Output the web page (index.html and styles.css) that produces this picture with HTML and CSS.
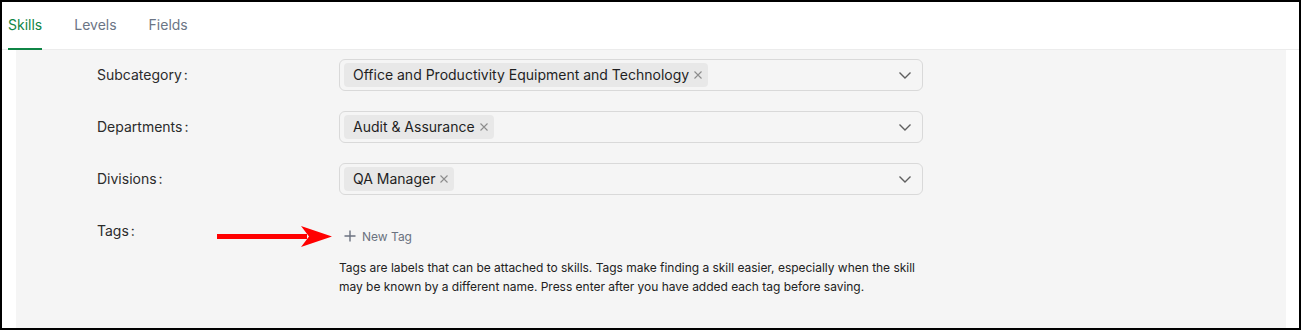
FILE: index.html
```html
<!DOCTYPE html>
<html lang="en">
<head>
<meta charset="utf-8">
<title>Skills</title>
<link rel="stylesheet" href="styles.css">
</head>
<body>
<div class="frame">
  <nav class="tabs">
    <div class="tab active">Skills</div>
    <div class="tab">Levels</div>
    <div class="tab">Fields</div>
  </nav>
  <div class="panel">
    <div class="form">
      <div class="row">
        <div class="label">Subcategory</div>
        <div class="control">
          <div class="select">
            <span class="chip">Office and Productivity Equipment and Technology<svg class="x" width="8" height="8" viewBox="0 0 8 8"><path d="M0.5 0.5 L7.5 7.5 M7.5 0.5 L0.5 7.5" stroke="#8c8c8c" stroke-width="1.1"/></svg></span>
            <svg class="chev" width="14" height="14" viewBox="0 0 14 14"><path d="M1.5 4.5 L7 10 L12.5 4.5" fill="none" stroke="#5f5f5f" stroke-width="1.4"/></svg>
          </div>
        </div>
      </div>
      <div class="row">
        <div class="label">Departments</div>
        <div class="control">
          <div class="select">
            <span class="chip">Audit &amp; Assurance<svg class="x" width="8" height="8" viewBox="0 0 8 8"><path d="M0.5 0.5 L7.5 7.5 M7.5 0.5 L0.5 7.5" stroke="#8c8c8c" stroke-width="1.1"/></svg></span>
            <svg class="chev" width="14" height="14" viewBox="0 0 14 14"><path d="M1.5 4.5 L7 10 L12.5 4.5" fill="none" stroke="#5f5f5f" stroke-width="1.4"/></svg>
          </div>
        </div>
      </div>
      <div class="row">
        <div class="label">Divisions</div>
        <div class="control">
          <div class="select">
            <span class="chip">QA Manager<svg class="x" width="8" height="8" viewBox="0 0 8 8"><path d="M0.5 0.5 L7.5 7.5 M7.5 0.5 L0.5 7.5" stroke="#8c8c8c" stroke-width="1.1"/></svg></span>
            <svg class="chev" width="14" height="14" viewBox="0 0 14 14"><path d="M1.5 4.5 L7 10 L12.5 4.5" fill="none" stroke="#5f5f5f" stroke-width="1.4"/></svg>
          </div>
        </div>
      </div>
      <div class="row tags-row">
        <div class="label">Tags</div>
        <div class="control">
          <div class="new-tag">
            <svg width="12" height="12" viewBox="0 0 12 12"><path d="M6 0.5 V11.5 M0.5 6 H11.5" stroke="#6b7280" stroke-width="1.4"/></svg>
            <span>New Tag</span>
          </div>
          <p class="help">Tags are labels that can be attached to skills. Tags make finding a skill easier, especially when the skill may be known by a different name. Press enter after you have added each tag before saving.</p>
        </div>
      </div>
    </div>
  </div>
  <svg class="arrow" width="118" height="22" viewBox="0 0 118 22">
    <rect x="0" y="8" width="90" height="5" fill="#f00"/>
    <path d="M84 0 L115 10.5 L84 21 L92 10.5 Z" fill="#f00"/>
  </svg>
</div>
</body>
</html>
```
FILE: styles.css
```css
* { box-sizing: border-box; }
html, body { margin: 0; padding: 0; }
body {
  font-family: Inter, "Noto Sans", sans-serif;
  background: #fff;
}
.frame {
  position: relative;
  width: 1301px;
  height: 330px;
  border: 2px solid #000;
  background: #fff;
  display: flex;
  flex-direction: column;
  overflow: hidden;
}
.tabs {
  display: flex;
  gap: 32px;
  height: 48px;
  padding-left: 6px;
  border-bottom: 1px solid #ececec;
}
.tab {
  font-size: 14px;
  line-height: 46px;
  color: #6b7585;
  border-bottom: 2px solid transparent;
  height: 48px;
  margin-bottom: -1px;
}
.tab.active {
  color: #0f8546;
  border-bottom-color: #0f8546;
}
.panel {
  flex: 1;
  margin: 0 13px 0 14px;
  background: #f5f5f5;
  padding: 9px 0 0 81px;
}
.row {
  display: flex;
  margin-bottom: 20px;
}
.label {
  width: 242px;
  height: 32px;
  line-height: 32px;
  font-size: 14px;
  color: #2b2b2b;
}
.label::after {
  content: ":";
  margin-left: 2px;
}
.control { width: 584px; }
.select {
  height: 32px;
  border: 1px solid #d9d9d9;
  border-radius: 6px;
  display: flex;
  align-items: center;
  padding: 0 10px 0 4px;
}
.chip {
  height: 24px;
  line-height: 24px;
  background: #e8e8e8;
  border-radius: 4px;
  padding: 0 6px 0 9px;
  font-size: 14px;
  color: #1f1f1f;
  display: inline-flex;
  align-items: center;
}
.x {
  margin-left: 5px;
}
.chev { margin-left: auto; }
.tags-row .control { padding-top: 14px; }
.new-tag {
  display: flex;
  align-items: center;
  gap: 6px;
  padding-left: 5px;
  font-size: 12px;
  color: #6b7280;
  height: 14px;
}
.help {
  margin: 15px 0 0;
  font-size: 12px;
  line-height: 19px;
  letter-spacing: -0.02px;
  color: #222;
}
.arrow {
  position: absolute;
  left: 215px;
  top: 224px;
}
```
